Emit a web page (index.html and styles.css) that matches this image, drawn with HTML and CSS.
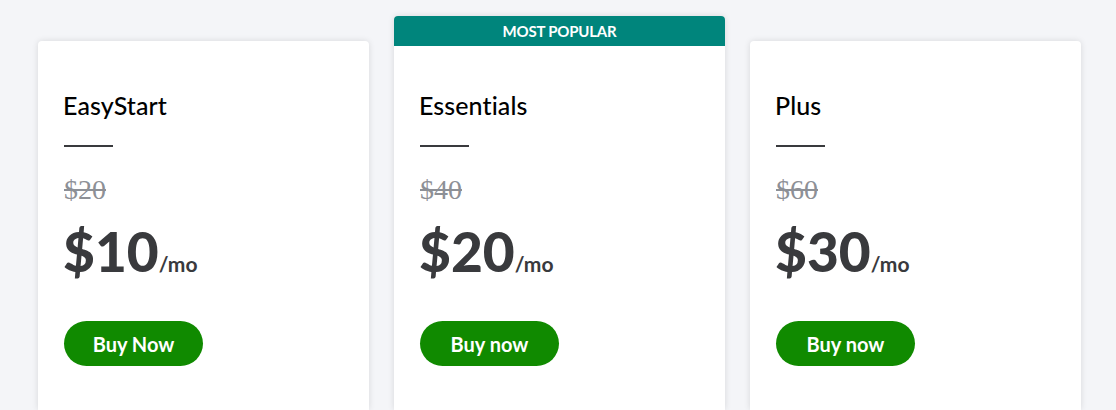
FILE: index.html
```html
<!DOCTYPE html>
<html lang="en">

<head>
    <meta charset="UTF-8">
    <meta name="viewport" content="width=device-width, initial-scale=1.0">
    <title>Pricing Plans</title>
    <link rel="stylesheet" href="styles.css">
</head>

<body>
    <div class="plans">
        <div class="card">
            <div class="card-body">
                <h2 class="plan-name">EasyStart</h2>
                <div class="divider"></div>
                <div class="old-price">$20</div>
                <div class="price">$10<span class="per">/mo</span></div>
                <button class="buy">Buy Now</button>
            </div>
        </div>

        <div class="card popular">
            <div class="badge">MOST POPULAR</div>
            <div class="card-body">
                <h2 class="plan-name">Essentials</h2>
                <div class="divider"></div>
                <div class="old-price">$40</div>
                <div class="price">$20<span class="per">/mo</span></div>
                <button class="buy">Buy now</button>
            </div>
        </div>

        <div class="card">
            <div class="card-body">
                <h2 class="plan-name">Plus</h2>
                <div class="divider"></div>
                <div class="old-price">$60</div>
                <div class="price">$30<span class="per">/mo</span></div>
                <button class="buy">Buy now</button>
            </div>
        </div>
    </div>
</body>

</html>
```

FILE: styles.css
```css
body {
    font-family: Lato, "Open Sans", sans-serif;
    background-color: #f4f5f8;
    margin: 0;
    height: 410px;
    overflow: hidden;
}

.plans {
    display: flex;
    align-items: flex-start;
    gap: 25px;
    padding-left: 38px;
}

.card {
    width: 331px;
    height: 369px;
    margin-top: 41px;
    background-color: #fff;
    border-radius: 4px 4px 0 0;
    box-shadow: 0 0 6px rgba(0, 0, 0, 0.12);
    overflow: hidden;
}

.card.popular {
    height: 394px;
    margin-top: 16px;
}

.badge {
    height: 30px;
    line-height: 30px;
    background-color: #00857c;
    color: #fff;
    text-align: center;
    font-size: 15px;
    font-weight: 700;
    letter-spacing: -0.2px;
}

.card-body {
    padding: 50px 26px 0 25px;
}

.popular .card-body {
    padding-top: 45px;
}

.plan-name {
    margin: 0;
    font-size: 25px;
    font-weight: 500;
    color: #000;
    line-height: 28px;
    letter-spacing: 0.1px;
}

.divider {
    width: 49px;
    height: 2px;
    background-color: #393a3d;
    margin-top: 26px;
    margin-left: 1px;
}

.old-price {
    font-family: "Liberation Serif", serif;
    font-size: 28px;
    color: #8d9096;
    text-decoration: line-through;
    margin-top: 28px;
    margin-left: 1px;
    line-height: 30px;
}

.price {
    font-size: 55px;
    font-weight: 900;
    color: #393a3d;
    line-height: 60px;
    margin-top: 16px;
}

.per {
    font-size: 21px;
    font-weight: 700;
}

.buy {
    margin-top: 27px;
    margin-left: 1px;
    width: 139px;
    height: 45px;
    border: none;
    border-radius: 23px;
    background-color: #108a00;
    color: #fff;
    font-family: Lato, sans-serif;
    font-size: 20px;
    font-weight: 700;
    cursor: pointer;
}
```
